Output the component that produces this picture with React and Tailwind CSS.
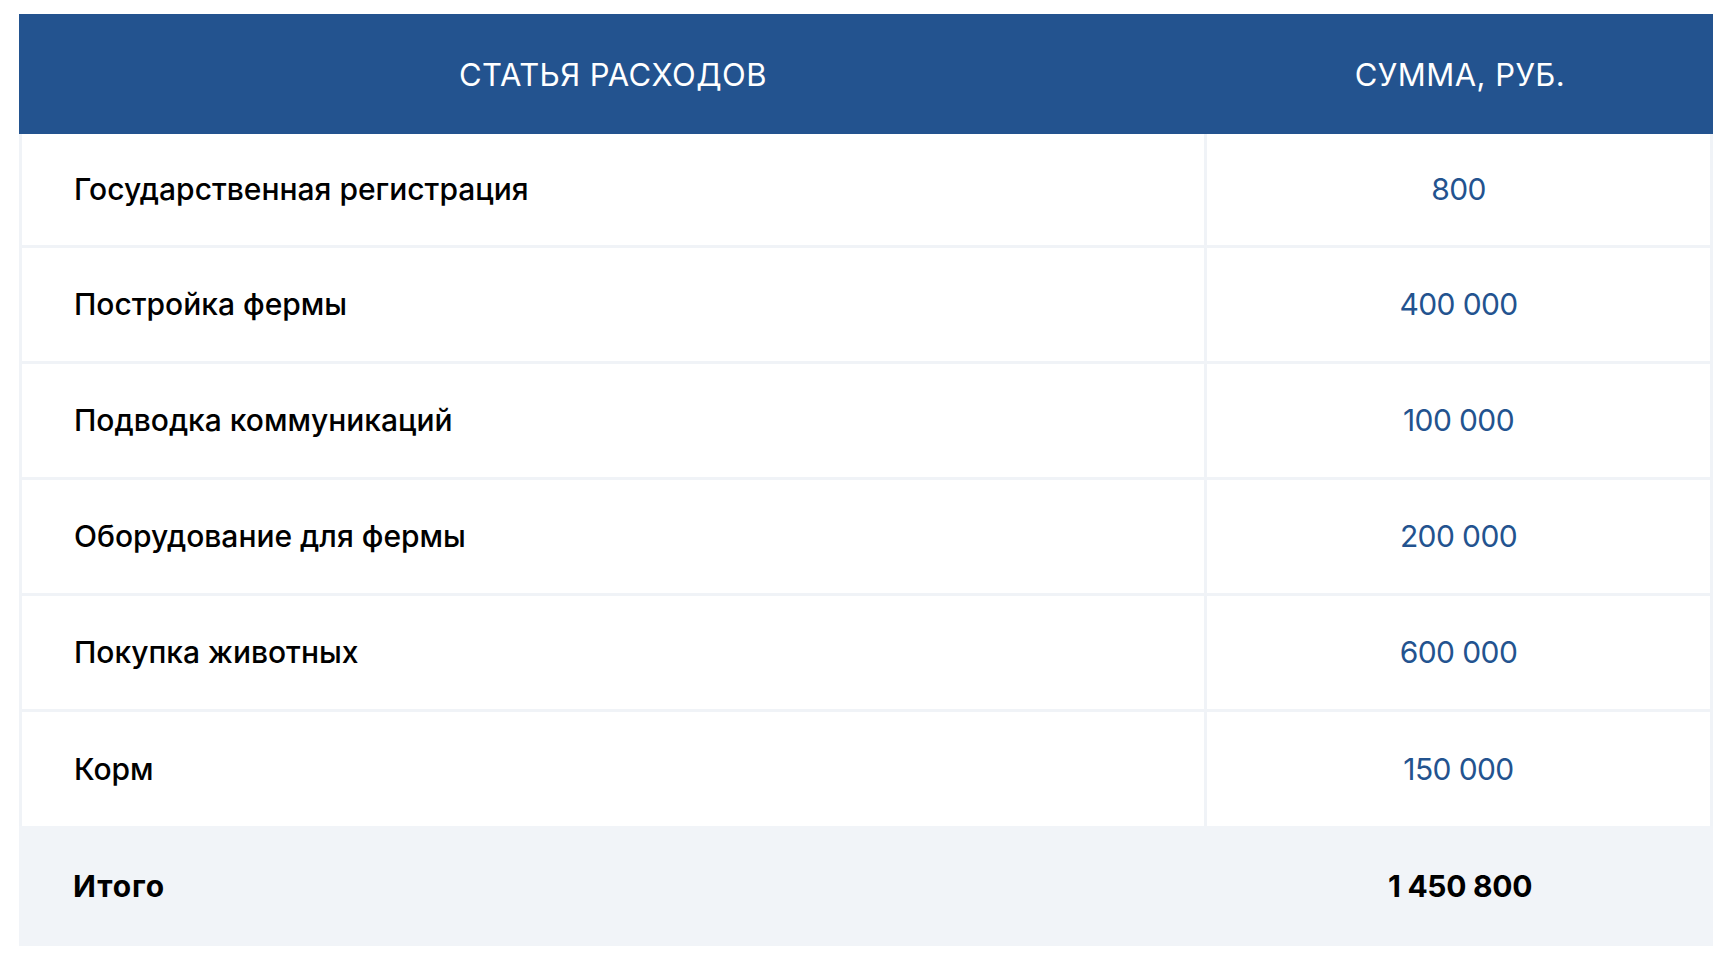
const rows = [
  { name: "Государственная регистрация", sum: "800", h: "h-[114px]" },
  { name: "Постройка фермы", sum: "400 000", h: "h-[116px]" },
  { name: "Подводка коммуникаций", sum: "100 000", h: "h-[116px]" },
  { name: "Оборудование для фермы", sum: "200 000", h: "h-[116px]" },
  { name: "Покупка животных", sum: "600 000", h: "h-[116px]" },
  { name: "Корм", sum: "150 000", h: "h-[114px]" },
]

export default function App() {
  return (
    <div className="min-h-screen bg-white pt-[14px] pl-[19px] font-['Inter','Liberation_Sans',Arial,sans-serif]">
      <div className="w-[1694px]">
        <div className="flex h-[120px] bg-[#23538f] text-white text-[31px] tracking-[0.015em] uppercase">
          <div className="w-[1188px] flex items-center justify-center pt-[2px]">Статья расходов</div>
          <div className="flex-1 flex items-center justify-center pt-[2px]">Сумма, руб.</div>
        </div>

        {rows.map((row, i) => (
          <div
            key={row.name}
            className={
              "flex box-border border-x-[3px] border-[#f0f3f7] " +
              row.h +
              (i < rows.length - 1 ? " border-b-[3px]" : "")
            }
          >
            <div className="w-[1185px] box-border border-r-[3px] border-[#f0f3f7] flex items-center pl-[52px] text-[30px] font-medium text-black">
              {row.name}
            </div>
            <div className="flex-1 flex items-center justify-center text-[30px] tracking-[-0.02em] text-[#23538f]">
              {row.sum}
            </div>
          </div>
        ))}

        <div className="flex h-[120px] bg-[#f1f4f8] font-bold text-[30px] text-black">
          <div className="w-[1188px] flex items-center pl-[54px] tracking-[0.03em]">Итого</div>
          <div className="flex-1 flex items-center justify-center tracking-[-0.01em]">1 450 800</div>
        </div>
      </div>
    </div>
  )
}
